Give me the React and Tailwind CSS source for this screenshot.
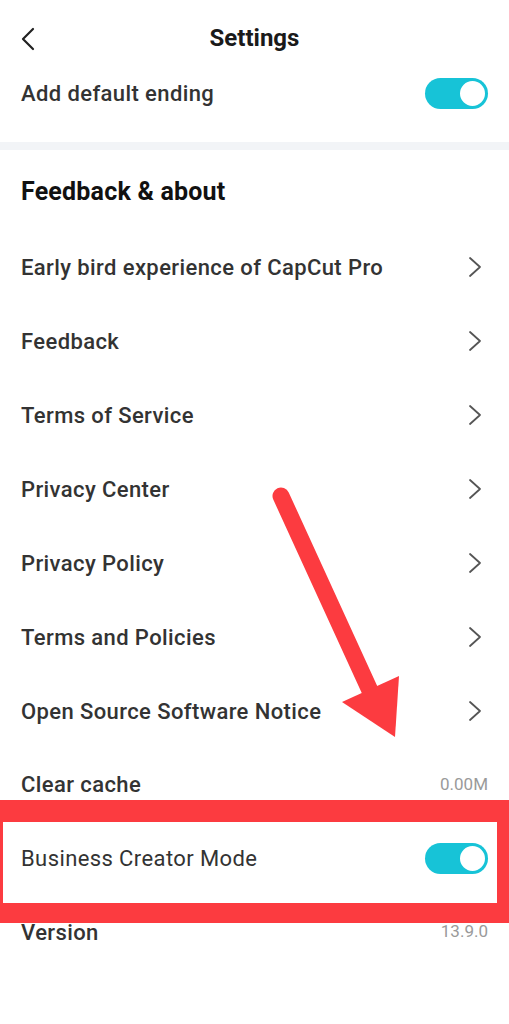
import React from "react";

const font = { fontFamily: "Roboto, 'Noto Sans', sans-serif" };

const Chevron = () => (
  <svg width="14" height="22" viewBox="0 0 14 22" fill="none">
    <path d="M2 2 L12 11 L2 20" stroke="#555" strokeWidth="1.8" strokeLinecap="round" strokeLinejoin="round" />
  </svg>
);

const Toggle = () => (
  <div className="w-[63px] h-[31px] rounded-full bg-[#17c3d7] flex items-center justify-end pr-[1px]">
    <div className="w-[29px] h-[29px] rounded-full bg-white border-[2px] border-[#17c3d7]" />
  </div>
);

const links = [
  "Early bird experience of CapCut Pro",
  "Feedback",
  "Terms of Service",
  "Privacy Center",
  "Privacy Policy",
  "Terms and Policies",
  "Open Source Software Notice",
];

const App = () => {
  return (
    <div className="relative w-[509px] h-[1024px] bg-white overflow-hidden" style={font}>
      {/* header */}
      <div className="pt-[16px]">
        <div className="relative h-[44px] flex items-center justify-center">
          <div className="absolute left-[20px] top-[11px]">
            <svg width="16" height="24" viewBox="0 0 16 24" fill="none">
              <path d="M13 2 L3 12 L13 22" stroke="#222" strokeWidth="2.2" strokeLinecap="round" strokeLinejoin="round" />
            </svg>
          </div>
          <div className="text-[24px] font-bold text-[#1a1a1a]">Settings</div>
        </div>
      </div>

      <div className="h-[66px] flex items-center justify-between pl-[21px] pr-[21px]">
        <div className="text-[22px] font-medium tracking-[0.4px] text-[#333]">Add default ending</div>
        <Toggle />
      </div>
      <div className="h-[16px]" />
      <div className="h-[8px] bg-[#f2f4f7]" />

      <div className="h-[80px] pt-[4px] flex items-center pl-[21px]">
        <div className="text-[25px] font-bold tracking-[0.2px] text-[#111]">Feedback &amp; about</div>
      </div>

      {links.map((l) => (
        <div key={l} className="h-[74px] flex items-center justify-between pl-[21px] pr-[27px]">
          <div className="text-[22px] font-medium tracking-[0.4px] text-[#333]">{l}</div>
          <Chevron />
        </div>
      ))}

      <div className="h-[73px] flex items-center justify-between pl-[21px] pr-[21px]">
        <div className="text-[22px] font-medium tracking-[0.4px] text-[#333]">Clear cache</div>
        <div className="text-[17px] text-[#9a9a9a]">0.00M</div>
      </div>
      <div className="h-[74px] flex items-center justify-between pl-[21px] pr-[21px]">
        <div className="text-[22px] tracking-[0.4px] text-[#333]">Business Creator Mode</div>
        <Toggle />
      </div>
      <div className="h-[74px] flex items-center justify-between pl-[21px] pr-[21px]">
        <div className="text-[22px] font-medium tracking-[0.4px] text-[#333]">Version</div>
        <div className="text-[17px] text-[#9a9a9a]">13.9.0</div>
      </div>

      {/* annotation overlay */}
      <div className="absolute left-0 top-[800px] w-[509px] h-[123px] border-t-[22px] border-b-[20px] border-l-[3px] border-r-[12px] border-[#fc3b40]" />
      <svg className="absolute left-0 top-0" width="509" height="1024" viewBox="0 0 509 1024">
        <line x1="281" y1="496" x2="372" y2="695" stroke="#fc3b40" strokeWidth="17" strokeLinecap="round" />
        <polygon points="342,702 399,676 395,737" fill="#fc3b40" />
      </svg>
    </div>
  );
};

export default App;
